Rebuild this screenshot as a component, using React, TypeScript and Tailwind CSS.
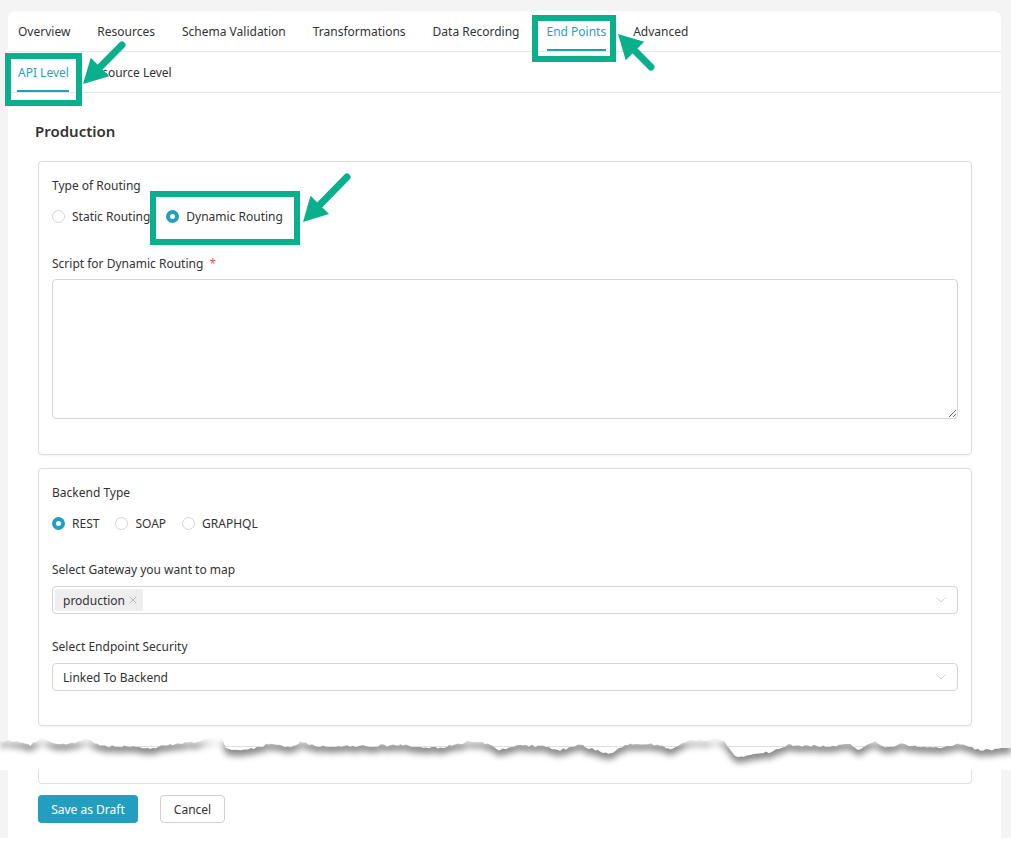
import React from 'react';
import { ChevronDown, X } from 'lucide-react';

const GREEN = '#0aaf8c';

const tabs = [
  'Overview',
  'Resources',
  'Schema Validation',
  'Transformations',
  'Data Recording',
  'End Points',
  'Advanced',
];

function Radio({ checked, label }: { checked?: boolean; label: string }) {
  return (
    <label className="flex items-center gap-[7px] h-[18px] text-[12px] text-[#333]">
      {checked ? (
        <span className="w-[13px] h-[13px] rounded-full bg-[#229fbe] flex items-center justify-center">
          <span className="w-[5px] h-[5px] rounded-full bg-white" />
        </span>
      ) : (
        <span className="w-[13px] h-[13px] rounded-full border border-[#d4d4d4] bg-white" />
      )}
      <span className="translate-y-px">{label}</span>
    </label>
  );
}

function Card({ children }: { children: React.ReactNode }) {
  return (
    <div className="border border-[#dcdcdc] rounded-[4px] shadow-[0_1px_2px_rgba(0,0,0,0.06)] px-[13px] pt-[14px]">
      {children}
    </div>
  );
}

// rough points of the torn paper edge (page coords)
const EDGE: [number, number][] = [
  [0, 742], [8, 740], [20, 742], [30, 745], [40, 738], [50, 742], [60, 745],
  [75, 743], [88, 739], [100, 746], [130, 747], [150, 748], [170, 745],
  [200, 741], [215, 737], [222, 738], [226, 749], [245, 750], [270, 744],
  [290, 747], [300, 742], [320, 746], [360, 746], [400, 745], [420, 747],
  [440, 748], [470, 741], [490, 744], [500, 750], [520, 745], [540, 746],
  [560, 750], [580, 745], [600, 751], [610, 754], [630, 743], [660, 745],
  [670, 750], [690, 740], [720, 739], [724, 741], [735, 757], [760, 754],
  [770, 752], [790, 745], [830, 746], [850, 744], [858, 750], [875, 742],
  [885, 748], [900, 744], [940, 748], [960, 744], [980, 750], [1011, 748],
];

function noise(x: number) {
  const s = Math.sin(x * 12.9898) * 43758.5453;
  return s - Math.floor(s);
}

function tearPath(top: number) {
  const pts: string[] = [];
  for (let i = 0; i < EDGE.length - 1; i++) {
    const [x0, y0] = EDGE[i];
    const [x1, y1] = EDGE[i + 1];
    for (let x = x0; x < x1; x += 3) {
      const t = (x - x0) / (x1 - x0);
      const y = y0 + (y1 - y0) * t + (noise(x) - 0.5) * 2.4;
      pts.push(`${x},${(y - top).toFixed(1)}`);
    }
  }
  const last = EDGE[EDGE.length - 1];
  pts.push(`${last[0]},${last[1] - top}`);
  return `M0,0 L1011,0 L${pts.reverse().join(' L')} Z`;
}

function Tear() {
  const top = 737;
  const d = tearPath(top);
  return (
    <svg width="1011" height="33" viewBox="0 0 1011 33" className="block">
      <defs>
        <filter id="tearBlur" x="-5%" y="-50%" width="110%" height="200%">
          <feGaussianBlur stdDeviation="3" />
        </filter>
        <clipPath id="tearClip">
          <path d={d} />
        </clipPath>
      </defs>
      <rect width="1011" height="33" fill="#fff" />
      <path d={d} fill="#5c5c5c" opacity="0.7" transform="translate(0,6)" filter="url(#tearBlur)" />
      <g clipPath="url(#tearClip)">
        <rect width="1011" height="33" fill="#fff" />
        <rect width="8" height="33" fill="#f4f4f4" />
        <rect x="1001" width="10" height="33" fill="#f4f4f4" />
        <rect x="38.5" y="9.5" width="934" height="60" rx="4" fill="none" stroke="#e0e0e0" />
      </g>
    </svg>
  );
}

function Arrow({ x1, y1, x2, y2 }: { x1: number; y1: number; x2: number; y2: number }) {
  const dx = x2 - x1;
  const dy = y2 - y1;
  const len = Math.hypot(dx, dy);
  const ux = dx / len;
  const uy = dy / len;
  const nx = -uy;
  const ny = ux;
  const head = 24;
  const half = 13;
  const bx = x2 - ux * head;
  const by = y2 - uy * head;
  return (
    <g>
      <line x1={x1} y1={y1} x2={bx + ux * 3} y2={by + uy * 3} stroke={GREEN} strokeWidth="7" strokeLinecap="round" />
      <polygon
        points={`${x2},${y2} ${bx + nx * half},${by + ny * half} ${bx - nx * half},${by - ny * half}`}
        fill={GREEN}
      />
    </g>
  );
}

export default function App() {
  return (
    <div className="relative w-[1011px] h-[843px] overflow-hidden bg-[#f4f4f4] font-['Noto_Sans',sans-serif] text-[#333]">
      <div className="pt-[11px] pl-2 pr-[10px]">
        <div className="bg-white rounded-t-lg">
          <div className="h-[41px] border-b border-[#e6e6e6] flex gap-[27px] pl-[10px]">
            {tabs.map(t => (
              <div
                key={t}
                className={`relative h-10 flex items-center text-[12px] ${t === 'End Points' ? 'text-[#2a9fc4]' : 'text-[#333]'}`}
              >
                <span className="translate-y-px">{t}</span>
                {t === 'End Points' && <span className="absolute left-0 right-0 bottom-0 h-[2px] bg-[#229fbe]" />}
              </div>
            ))}
          </div>
          <div className="h-[41px] border-b border-[#e6e6e6] flex gap-[19px] pl-[10px]">
            <div className="relative h-10 flex items-center text-[12px] text-[#2a9fc4]">
              <span className="translate-y-px">API Level</span>
              <span className="absolute -left-px right-0 bottom-0 h-[2px] bg-[#229fbe]" />
            </div>
            <div className="h-10 flex items-center text-[12px] text-[#333]">
              <span className="translate-y-px">Resource Level</span>
            </div>
          </div>

          <div className="pl-[30px] pr-[29px] pt-[28px] pb-[11px]">
            <h2 className="-ml-[3px] text-[15px] leading-5 font-semibold text-[#333]">Production</h2>

            <div className="mt-5">
              <Card>
                <div className="text-[12px] leading-[18px] text-[#333] translate-y-px">Type of Routing</div>
                <div className="mt-[13px] flex gap-[16px]">
                  <Radio label="Static Routing" />
                  <Radio checked label="Dynamic Routing" />
                </div>
                <div className="mt-[29px] text-[12px] leading-[18px] text-[#333] translate-y-px">
                  Script for Dynamic Routing <span className="ml-[3px] text-[#e05a5a]">*</span>
                </div>
                <textarea className="mt-[7px] block w-full h-[140px] border border-[#d6d6d6] rounded-[4px] outline-none text-[12px] p-2" />
                <div className="h-[35px]" />
              </Card>
            </div>

            <div className="mt-[13px]">
              <Card>
                <div className="text-[12px] leading-[18px] text-[#333] translate-y-px">Backend Type</div>
                <div className="mt-[13px] flex gap-[16px]">
                  <Radio checked label="REST" />
                  <Radio label="SOAP" />
                  <Radio label="GRAPHQL" />
                </div>
                <div className="mt-[28px] text-[12px] leading-[18px] text-[#333] translate-y-px">
                  Select Gateway you want to map
                </div>
                <div className="mt-2 h-7 border border-[#d6d6d6] rounded-[4px] flex items-center pl-[2px] pr-[8px]">
                  <span className="h-[22px] flex items-center gap-[2px] bg-[#eeeeee] rounded-[2px] pl-[8px] pr-[4px] text-[12px] text-[#333]">
                    <span className="translate-y-px">production</span>
                    <X size={12} strokeWidth={1.3} className="text-[#999]" />
                  </span>
                  <ChevronDown size={16} strokeWidth={1.1} className="ml-auto text-[#bdbdbd]" />
                </div>
                <div className="mt-[23px] text-[12px] leading-[18px] text-[#333] translate-y-px">
                  Select Endpoint Security
                </div>
                <div className="mt-2 h-7 border border-[#d6d6d6] rounded-[4px] flex items-center pl-[10px] pr-[8px] text-[12px] text-[#333]">
                  <span className="translate-y-px">Linked To Backend</span>
                  <ChevronDown size={16} strokeWidth={1.1} className="ml-auto text-[#bdbdbd]" />
                </div>
                <div className="h-[34px]" />
              </Card>
            </div>
          </div>
        </div>
      </div>

      <Tear />

      <div className="pl-2 pr-[10px]">
        <div className="bg-white h-[68px] pl-[30px] pr-[29px]">
          <div className="h-[14px] border-x border-b border-[#e0e0e0] rounded-b-[4px]" />
          <div className="mt-[11px] flex gap-[22px]">
            <button className="h-7 w-[100px] rounded-[4px] bg-[#229fbe] text-white text-[12px]">
              <span className="inline-block translate-y-px">Save as Draft</span>
            </button>
            <button className="h-7 w-[65px] rounded-[4px] border border-[#d0d0d0] bg-white text-[#333] text-[12px]">
              <span className="inline-block translate-y-px">Cancel</span>
            </button>
          </div>
        </div>
      </div>
      <div className="h-[5px] bg-white" />

      {/* annotations */}
      <div className="absolute left-[5px] top-[53px] w-[77px] h-[53px] border-[6px] border-[#0aaf8c] pointer-events-none" />
      <div className="absolute left-[532px] top-[15px] w-[84px] h-[47px] border-[6px] border-[#0aaf8c] pointer-events-none" />
      <div className="absolute left-[150px] top-[191px] w-[150px] h-[54px] border-[6px] border-[#0aaf8c] pointer-events-none" />
      <svg className="absolute inset-0 pointer-events-none" width="1011" height="843">
        <Arrow x1={122} y1={45} x2={83} y2={84} />
        <Arrow x1={651} y1={67} x2={618} y2={34} />
        <Arrow x1={347} y1={177} x2={303} y2={222} />
      </svg>
    </div>
  );
}
